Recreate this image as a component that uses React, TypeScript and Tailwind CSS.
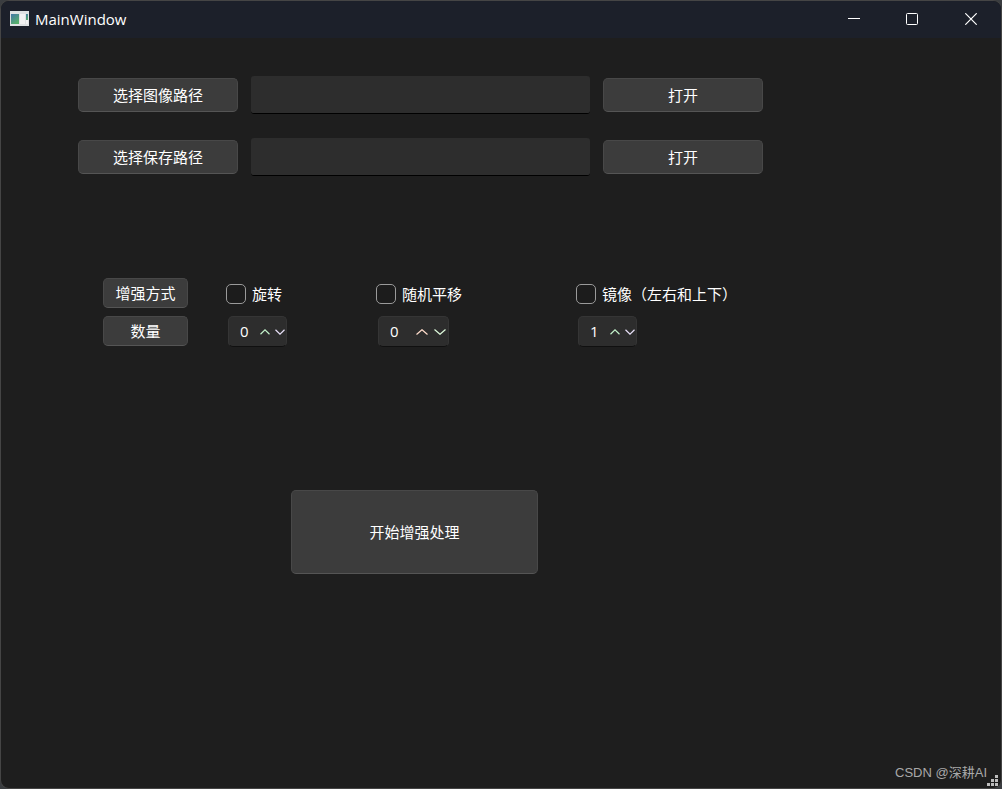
import { useState } from 'react';

interface PathRowProps {
  id: string;
  label: string;
}

interface Method {
  id: string;
  label: string;
  count: number;
  width: string;
  wide: boolean;
}

const METHODS: Method[] = [
  { id: 'rotate', label: '旋转', count: 0, width: 'w-[59px]', wide: false },
  { id: 'shift', label: '随机平移', count: 0, width: 'w-[71px]', wide: true },
  { id: 'mirror', label: '镜像（左右和上下）', count: 1, width: 'w-[59px]', wide: false },
];

const buttonClass =
  'rounded-[5px] border border-[#484848] border-b-[#555555] bg-[#3c3c3c] hover:bg-[#444444] text-center';

const TitleBar = () => (
  <header className="flex h-[37px] items-center bg-[#1c202a] pb-0.5 pl-[9px]">
    <svg width="19" height="15" viewBox="0 0 19 15" aria-hidden="true">
      <defs>
        <linearGradient id="pane" x1="0" y1="0" x2="0.6" y2="1">
          <stop offset="0" stopColor="#4477a8" />
          <stop offset="1" stopColor="#57b06b" />
        </linearGradient>
      </defs>
      <rect width="19" height="15" fill="#dfe2e3" />
      <rect x="1" y="3" width="8" height="10" fill="url(#pane)" />
      <rect x="10" y="3" width="5" height="10" fill="#f2f2f2" />
      <rect x="16" y="3" width="2" height="6" fill="url(#pane)" />
      <rect x="16" y="9" width="2" height="4" fill="#f2f2f2" />
    </svg>
    <h1 className="ml-1.5 flex-1 text-[15px] leading-5">MainWindow</h1>
    <button type="button" aria-label="Minimize" className="flex h-full w-[58px] items-center justify-center">
      <svg width="12" height="12" viewBox="0 0 12 12" stroke="white" fill="none">
        <path d="M0 5.5h12" />
      </svg>
    </button>
    <button type="button" aria-label="Maximize" className="flex h-full w-[58px] items-center justify-center">
      <svg width="12" height="12" viewBox="0 0 12 12" stroke="white" fill="none">
        <rect x="0.5" y="0.5" width="11" height="11" rx="1" />
      </svg>
    </button>
    <button type="button" aria-label="Close" className="mr-px flex h-full w-[59px] items-center justify-center">
      <svg width="12" height="12" viewBox="0 0 12 12" stroke="white" strokeWidth="1.2" fill="none">
        <path d="M0.3 0.3l11.4 11.4M11.7 0.3L0.3 11.7" />
      </svg>
    </button>
  </header>
);

const PathRow = ({ id, label }: PathRowProps) => {
  const [path, setPath] = useState('');

  return (
    <div className="flex items-center gap-[13px]">
      <button type="button" className={`${buttonClass} h-[34px] w-[160px]`}>
        {label}
      </button>
      <input
        id={id}
        type="text"
        aria-label={label}
        value={path}
        onChange={(e) => setPath(e.target.value)}
        className="h-[38px] min-w-0 flex-1 rounded-[3px] border-b border-black bg-[#2d2d2d] px-2 outline-none"
      />
      <button type="button" className={`${buttonClass} h-[34px] w-[160px]`}>
        打开
      </button>
    </div>
  );
};

const SpinBox = ({ method }: { method: Method }) => {
  const [value, setValue] = useState(method.count);
  const size = method.wide ? 12 : 10;

  return (
    <div
      className={`${method.width} ml-0.5 flex h-[31px] items-center rounded-[5px] border border-[#353535] border-b-[#101010] bg-[#2d2d2d]`}
    >
      <input
        type="text"
        inputMode="numeric"
        aria-label={`${method.label}数量`}
        value={value}
        onChange={(e) => setValue(Number(e.target.value) || 0)}
        className="min-w-0 flex-1 bg-transparent pb-0.5 pl-[11px] outline-none"
      />
      <button
        type="button"
        aria-label="增加"
        onClick={() => setValue(value + 1)}
        className={method.wide ? 'flex w-[19px] justify-center' : 'flex w-[16px] justify-center'}
      >
        <svg
          width={size}
          height="6"
          viewBox={`0 0 ${size} 6`}
          fill="none"
          stroke={method.wide ? '#ffdccb' : '#c2f2ca'}
          strokeWidth="1.2"
        >
          <path d={method.wide ? 'M0.5 5.5L6 0.7l5.5 4.8' : 'M0.5 5.2L5 0.9L9.5 5.2'} />
        </svg>
      </button>
      <button
        type="button"
        aria-label="减少"
        onClick={() => setValue(Math.max(0, value - 1))}
        className={method.wide ? 'flex w-[17px] justify-center' : 'flex w-[13px] justify-center'}
      >
        <svg
          width={size}
          height="6"
          viewBox={`0 0 ${size} 6`}
          fill="none"
          stroke={method.wide ? '#dcf8da' : '#e8e0f8'}
          strokeWidth="1.2"
        >
          <path d={method.wide ? 'M0.5 0.5L6 5.3l5.5 -4.8' : 'M0.5 0.8L5 5.1L9.5 0.8'} />
        </svg>
      </button>
    </div>
  );
};

export default function App() {
  return (
    <div className="bg-[#3a3d40]">
      <div className="flex min-h-screen flex-col overflow-hidden rounded-[9px] border border-[#454545] bg-[#1e1e1e] font-['Open_Sans','Noto_Sans_CJK_SC',sans-serif] text-[15px] leading-5 text-white">
        <TitleBar />

        <main className="flex flex-1 flex-col pt-[38px] pr-[238px] pl-[77px]">
          <section className="flex flex-col gap-6">
            <PathRow id="image-path" label="选择图像路径" />
            <PathRow id="save-path" label="选择保存路径" />
          </section>

          {/* Augmentation methods and their counts */}
          <section className="mt-[102px] ml-[25px] grid grid-cols-[123px_150px_200px_1fr] gap-y-2">
            <button type="button" className={`${buttonClass} h-[30px] w-[85px]`}>
              增强方式
            </button>
            {METHODS.map((method) => (
              <label key={method.id} htmlFor={method.id} className="flex items-center gap-1.5 pt-0.5 whitespace-nowrap">
                <input
                  id={method.id}
                  type="checkbox"
                  className="size-5 shrink-0 appearance-none rounded-[5px] border border-[#9a9a9a] bg-[#1c1c1c] checked:bg-[#4c8dd6]"
                />
                {method.label}
              </label>
            ))}
            <button type="button" className={`${buttonClass} h-[30px] w-[85px]`}>
              数量
            </button>
            {METHODS.map((method) => (
              <SpinBox key={method.id} method={method} />
            ))}
          </section>

          <button type="button" className={`${buttonClass} mt-[143px] ml-[213px] h-[84px] w-[247px]`}>
            开始增强处理
          </button>
        </main>

        <footer className="flex items-end justify-end pr-[3px] pb-0.5">
          <span className="mb-[3px] font-['Liberation_Sans','Noto_Sans_CJK_SC',sans-serif] text-[13px] text-[#a8a8a8]">
            CSDN @深耕AI
          </span>
          <svg width="11" height="11" viewBox="0 0 11 11" fill="#bdbdbd" aria-hidden="true">
            <path d="M8 0h3v3h-3zM4 4h3v3h-3zM8 4h3v3h-3zM0 8h3v3h-3zM4 8h3v3h-3zM8 8h3v3h-3z" />
          </svg>
        </footer>
      </div>
    </div>
  );
}
